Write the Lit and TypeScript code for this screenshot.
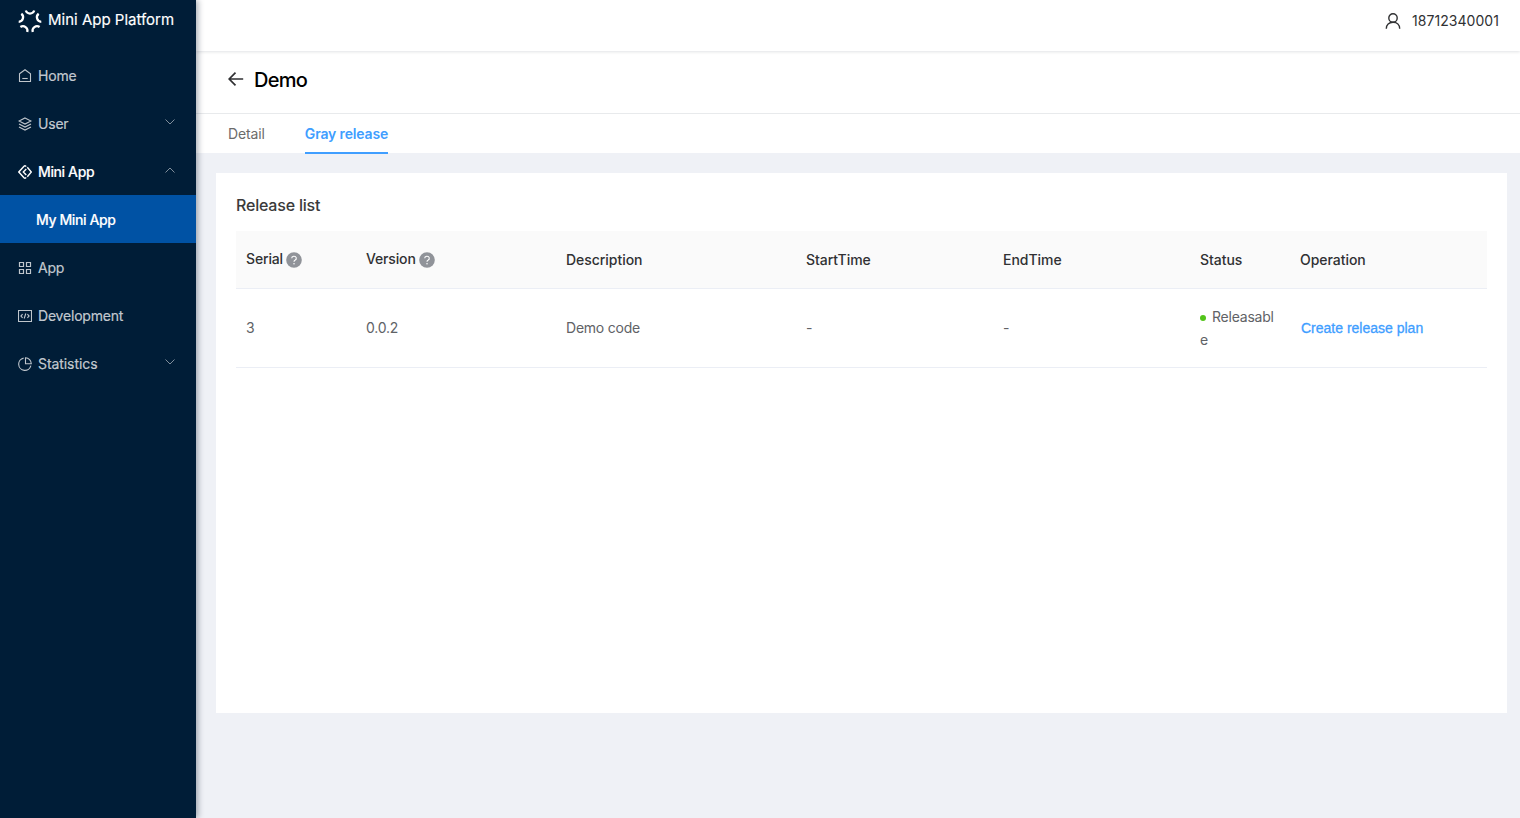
import { LitElement, html, css, svg } from "lit";
import { customElement } from "lit/decorators.js";
import { classMap } from "lit/directives/class-map.js";

const LOGO_TURNS = [0, 72, 144, 216, 288];

const icons: Record<string, unknown> = {
  home: svg`<path d="M1.500 4.700 7 .7l5.500 4v7.800h-11z"/><path d="M4.300 9.500h5.400"/>`,
  user: svg`<path d="M7 .9 13 4 7 7.100 1 4z"/><path d="M1 7l6 3.100L13 7M1 10l6 3.100 6-3.100"/>`,
  mini: svg`<path d="M8.300 1.500 7 .7Q6.500.7 6 1.200L.8 7 6 12.800Q6.500 13.300 7 13.300L8.300 12.500M9.300 2.300 13.300 7 9.300 11.700M8.300 3.900 5.300 7l3 3.100" stroke-width="1.400"/>`,
  app: svg`<path d="M1.500 1.500h4v4h-4zM8.500 1.500h4v4h-4zM1.500 8.500h4v4h-4zM8.500 8.500h4v4h-4z" stroke-width="1.200"/>`,
  dev: svg`<path d="M.5 1.500h13v11H.5z"/><path d="M4.600 5.200 2.900 7l1.700 1.800M9.400 5.200 11.100 7 9.400 8.800M7.800 4.500 6.200 9.500"/>`,
  stats: svg`<path d="M5.600 1.100a6.200 6.200 0 1 0 7.300 7.600"/><path d="M7.500 .8v6h5.800A6 6 0 0 0 7.500.8z"/>`,
};

interface NavItem {
  icon: string;
  label: string;
  arrow?: "up" | "down";
}

const NAV: NavItem[] = [
  { icon: "home", label: "Home" },
  { icon: "user", label: "User", arrow: "down" },
  { icon: "mini", label: "Mini App", arrow: "up" },
  { icon: "", label: "My Mini App" },
  { icon: "app", label: "App" },
  { icon: "dev", label: "Development" },
  { icon: "stats", label: "Statistics", arrow: "down" },
];

@customElement("side-nav")
class SideNav extends LitElement {
  static styles = css`
    :host {
      display: block;
      width: 196px;
      height: 818px;
      background: #001d37;
      box-shadow: 2px 0 6px rgba(0, 21, 41, 0.35);
      z-index: 2;
    }
    .brand {
      display: flex;
      align-items: center;
      height: 51px;
      padding: 0 0 10px 18px;
      box-sizing: border-box;
      color: #fff;
      font-size: 15px;
      white-space: nowrap;
    }
    .brand svg {
      width: 24px;
      height: 24px;
      margin-right: 6px;
      flex: none;
    }
    .brand span {
      padding-bottom: 2px;
      -webkit-text-stroke: 0.15px #fff;
    }
    .item {
      display: flex;
      align-items: center;
      height: 48px;
      padding: 2px 21px 0 18px;
      box-sizing: border-box;
      color: rgba(255, 255, 255, 0.75);
      font-size: 14px;
      letter-spacing: -0.2px;
    }
    .item:last-child {
      letter-spacing: -0.07px;
    }
    .icon {
      width: 14px;
      height: 14px;
      margin-right: 6px;
      fill: none;
      stroke: currentColor;
      stroke-width: 1.1;
    }
    .label {
      flex: 1;
      padding-bottom: 2px;
      -webkit-text-stroke: 0.15px currentColor;
    }
    .arrow {
      width: 10px;
      height: 6px;
      margin-bottom: 4px;
      fill: none;
      stroke: rgba(255, 255, 255, 0.5);
    }
    .open {
      color: #fff;
      font-weight: 500;
      letter-spacing: -0.38px;
    }
    .active {
      padding-left: 36px;
      background: #0052a4;
      color: #fff;
      font-weight: 500;
      letter-spacing: -0.39px;
    }
  `;

  render() {
    return html`
      <div class="brand">
        <svg viewBox="-.8 -.3 25.600 25.600" fill="none" stroke="#fff" stroke-width="2.400">
          ${LOGO_TURNS.map(
            (a) => svg`<path d="M7.500 1.300Q8.600 4.500 12 4.500T16.500 1.300" transform="rotate(${a} 12 12.500)"/>`
          )}
        </svg>
        <span>Mini App Platform</span>
      </div>
      ${NAV.map(
        (n) => html`
          <div
            class=${classMap({
              item: true,
              open: n.arrow === "up",
              active: !n.icon,
            })}
          >
            ${n.icon ? html`<svg class="icon" viewBox="0 0 14 14">${icons[n.icon]}</svg>` : ""}
            <span class="label">${n.label}</span>
            ${n.arrow
              ? html`<svg class="arrow" viewBox="0 0 10 6">
                  <path d=${n.arrow === "down" ? "M.5.500 5 5 9.500.5" : "M.5 5.500 5 1 9.500 5.500"} />
                </svg>`
              : ""}
          </div>
        `
      )}
    `;
  }
}

@customElement("release-table")
class ReleaseTable extends LitElement {
  static styles = css`
    :host {
      display: block;
      font-size: 14px;
    }
    .row {
      display: grid;
      grid-template-columns: 120px 200px 240px 197px 197px 100px 197px;
      align-items: center;
      border-bottom: 1px solid #ebeef5;
      box-sizing: border-box;
      color: #606266;
      height: 79px;
      line-height: 23px;
      letter-spacing: -0.22px;
    }
    .head {
      height: 58px;
      background: #fafafa;
      color: #303133;
      font-weight: 500;
      letter-spacing: -0.04px;
    }
    .cell {
      padding: 0 10px;
      word-break: break-all;
    }
    .lift {
      padding-bottom: 2px;
    }
    .tip {
      display: flex;
      align-items: center;
      padding-bottom: 2px;
      letter-spacing: -0.15px;
    }
    .tip svg {
      width: 16px;
      height: 16px;
      margin: 3px 0 0 3px;
    }
    .dot {
      display: inline-block;
      width: 6px;
      height: 6px;
      margin-right: 6px;
      border-radius: 50%;
      background: #52c41a;
      vertical-align: 1px;
    }
    .link {
      padding-left: 11px;
      font-family: "Liberation Sans", Arial, sans-serif;
      color: #409eff;
      letter-spacing: 0;
      -webkit-text-stroke: 0.3px #409eff;
    }
  `;

  private help() {
    return html`<svg viewBox="0 0 16 16">
      <circle cx="8" cy="8" r="7.800" fill="#909399" />
      <path
        d="M5.700 6.300a2.300 2.100 0 1 1 3.300 1.900q-1 .5-1 1.500"
        fill="none"
        stroke="#fff"
        stroke-width="1.100"
      />
      <circle cx="8" cy="11.700" r=".75" fill="#fff" />
    </svg>`;
  }

  render() {
    return html`
      <div class="row head">
        <div class="cell tip">Serial${this.help()}</div>
        <div class="cell tip">Version${this.help()}</div>
        <div class="cell">Description</div>
        <div class="cell">StartTime</div>
        <div class="cell">EndTime</div>
        <div class="cell">Status</div>
        <div class="cell">Operation</div>
      </div>
      <div class="row">
        <div class="cell lift">3</div>
        <div class="cell lift">0.0.2</div>
        <div class="cell lift">Demo code</div>
        <div class="cell lift">-</div>
        <div class="cell lift">-</div>
        <div class="cell"><span class="dot"></span>Releasable</div>
        <div class="cell link">Create release plan</div>
      </div>
    `;
  }
}

@customElement("app-root")
class AppRoot extends LitElement {
  static styles = css`
    :host {
      display: flex;
      width: 1520px;
      height: 818px;
      overflow: hidden;
      font-family: Inter, "Liberation Sans", sans-serif;
    }
    side-nav {
      flex: none;
      position: relative;
    }
    .main {
      flex: 1;
      display: flex;
      flex-direction: column;
      background: #eff1f6;
    }
    .top {
      display: flex;
      justify-content: flex-end;
      height: 51px;
      padding: 0 21px 9px 0;
      box-sizing: border-box;
      align-items: center;
      background: #fff;
      color: #303133;
      font-size: 14px;
      letter-spacing: 0.06px;
      box-shadow: 0 1px 3px rgba(0, 21, 41, 0.12);
      position: relative;
    }
    .top svg {
      width: 16px;
      height: 16px;
      margin: 0 11px 1px 0;
      fill: none;
      stroke: #303133;
      stroke-width: 1.400;
    }
    .phone {
      padding-bottom: 1px;
    }
    .title {
      display: flex;
      align-items: center;
      height: 63px;
      padding: 0 0 4px 32px;
      box-sizing: border-box;
      border-bottom: 1px solid #e8eaec;
      background: #fff;
      color: #000;
      font-size: 20px;
      font-weight: 500;
      letter-spacing: -0.75px;
    }
    .title svg {
      width: 16px;
      height: 16px;
      margin: 0 10px 3px 0;
      fill: none;
      stroke: #303133;
      stroke-width: 1.700;
    }
    .tabs {
      display: flex;
      gap: 40px;
      height: 39px;
      padding-left: 32px;
      background: #fff;
      font-size: 14px;
      line-height: 39px;
      color: #6b6b6b;
      letter-spacing: -0.12px;
    }
    .tab {
      height: 40px;
      box-sizing: border-box;
    }
    .on {
      color: #409eff;
      font-weight: 600;
      letter-spacing: -0.15px;
      border-bottom: 2px solid #409eff;
    }
    .card {
      height: 540px;
      margin: 20px 13px 0 20px;
      padding: 0 20px;
      box-sizing: border-box;
      background: #fff;
    }
    .caption {
      height: 58px;
      line-height: 64px;
      font-size: 16px;
      font-weight: 500;
      letter-spacing: -0.2px;
      color: #3a3a3a;
    }
  `;

  render() {
    return html`
      <side-nav></side-nav>
      <div class="main">
        <div class="top">
          <svg viewBox="0 0 16 16">
            <circle cx="8" cy="5" r="4.200" />
            <path d="M1.300 15.700C1.300 11.700 4 9.200 8 9.200s6.700 2.500 6.700 6.500" />
          </svg>
          <span class="phone">18712340001</span>
        </div>
        <div class="title">
          <svg viewBox="0 0 16 16"><path d="M15.200 8H1.300M7.500 1.600 1.200 8l6.300 6.400" /></svg>
          <span>Demo</span>
        </div>
        <div class="tabs">
          <div class="tab">Detail</div>
          <div class="tab on">Gray release</div>
        </div>
        <div class="card">
          <div class="caption">Release list</div>
          <release-table></release-table>
        </div>
      </div>
    `;
  }
}
